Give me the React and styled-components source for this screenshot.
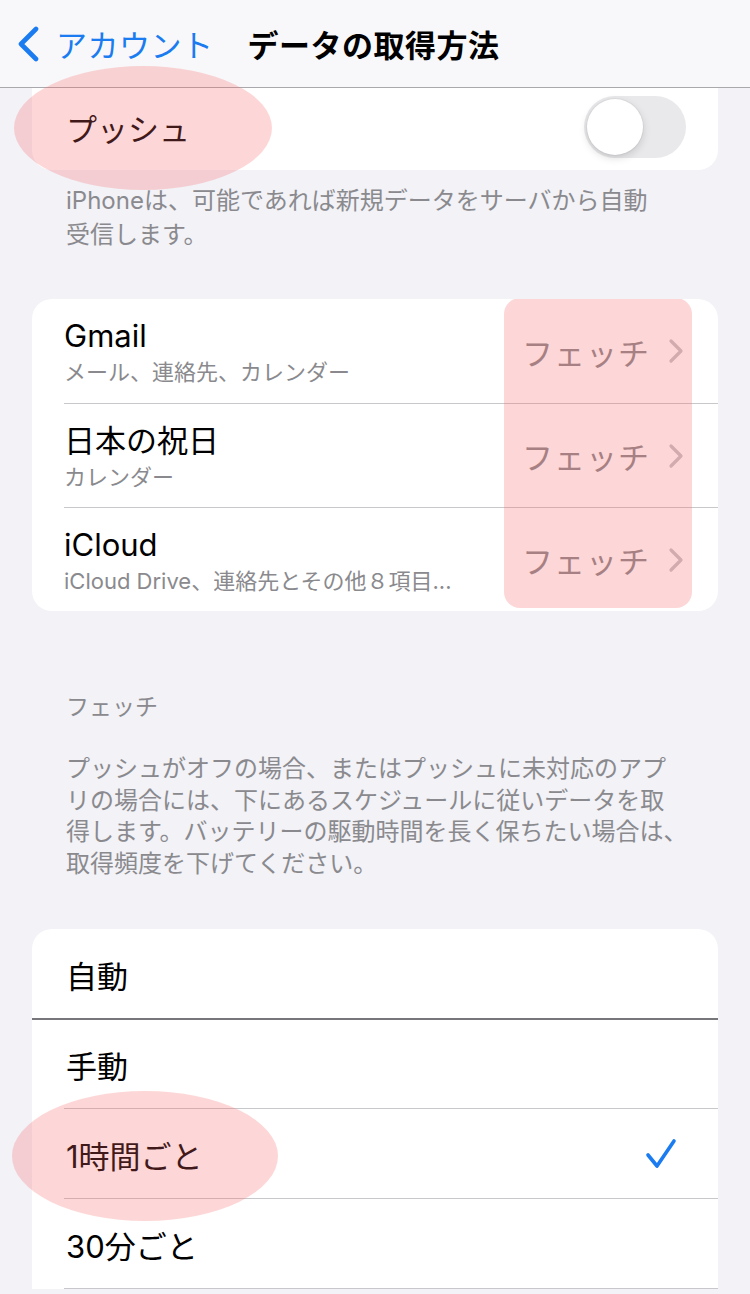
import styled, { createGlobalStyle } from "styled-components";

const GlobalStyle = createGlobalStyle`
  html, body {
    margin: 0;
    padding: 0;
    background: #f2f2f7;
  }
  body {
    font-family: "Inter", "Noto Sans CJK JP", sans-serif;
    -webkit-font-smoothing: antialiased;
  }
`;

const accounts = [
  { name: "Gmail", detail: "メール、連絡先、カレンダー" },
  { name: "日本の祝日", detail: "カレンダー" },
  { name: "iCloud", detail: "iCloud Drive、連絡先とその他８項目..." },
];

const schedules = [
  { label: "自動", strong: true },
  { label: "手動" },
  { label: "1時間ごと", checked: true },
  { label: "30分ごと" },
];

const ChevronLeft = () => (
  <svg width="24" height="36" viewBox="0 0 24 36">
    <path
      d="M20 3 L5 18 L20 33"
      fill="none"
      stroke="#1a7cf0"
      strokeWidth="4.6"
      strokeLinecap="round"
      strokeLinejoin="round"
    />
  </svg>
);

const ChevronRight = () => (
  <svg width="16" height="26" viewBox="0 0 16 26">
    <path
      d="M3 3 L13 13 L3 23"
      fill="none"
      stroke="#c4c4c8"
      strokeWidth="3.2"
      strokeLinecap="round"
      strokeLinejoin="round"
    />
  </svg>
);

const Check = () => (
  <svg width="34" height="32" viewBox="0 0 34 32">
    <path
      d="M4 17 L13 28 L30 3"
      fill="none"
      stroke="#1a7cf0"
      strokeWidth="3.6"
      strokeLinecap="round"
      strokeLinejoin="round"
    />
  </svg>
);

const App = () => {
  return (
    <Page>
      <GlobalStyle />
      <NavBar>
        <BackButton>
          <ChevronLeft />
          <BackLabel>アカウント</BackLabel>
        </BackButton>
        <NavTitle>データの取得方法</NavTitle>
      </NavBar>

      <PushCard>
        <PushLabel>プッシュ</PushLabel>
        <Toggle>
          <Knob />
        </Toggle>
        <Highlight $left={-18} $top={-2} $w={258} $h={124} />
      </PushCard>
      <Footer>
        iPhoneは、可能であれば新規データをサーバから自動
        <br />
        受信します。
      </Footer>

      <AccountCard>
        {accounts.map((each) => (
          <AccountRow key={each.name}>
            <AccountText>
              <AccountName>{each.name}</AccountName>
              <AccountDetail>{each.detail}</AccountDetail>
            </AccountText>
            <Value>フェッチ</Value>
            <ChevronRight />
          </AccountRow>
        ))}
        <ColumnHighlight />
      </AccountCard>

      <SectionHeader>フェッチ</SectionHeader>
      <Description>
        プッシュがオフの場合、またはプッシュに未対応のアプ
        <br />
        リの場合には、下にあるスケジュールに従いデータを取
        <br />
        得します。バッテリーの駆動時間を長く保ちたい場合は、
        <br />
        取得頻度を下げてください。
      </Description>

      <ScheduleCard>
        {schedules.map((each) => (
          <ScheduleRow key={each.label} $strong={each.strong}>
            <ScheduleLabel>{each.label}</ScheduleLabel>
            {each.checked && <Check />}
            {each.checked && (
              <Highlight $left={-20} $top={-18} $w={266} $h={130} />
            )}
          </ScheduleRow>
        ))}
      </ScheduleCard>
    </Page>
  );
};

export default App;

const Page = styled.div`
  width: 750px;
  height: 1294px;
  overflow: hidden;
  background: #f2f2f7;
`;

const NavBar = styled.header`
  position: relative;
  z-index: 3;
  height: 88px;
  box-sizing: border-box;
  display: flex;
  align-items: center;
  padding: 0 0 0 16px;
  background: #f8f8fa;
  border-bottom: 1px solid #a9a9ad;
`;

const BackButton = styled.div`
  display: flex;
  align-items: center;
  gap: 16px;
`;

const BackLabel = styled.span`
  font-size: 31px;
  color: #1a7cf0;
  letter-spacing: 0.5px;
`;

const NavTitle = styled.h1`
  margin: 0 0 0 34px;
  font-size: 31px;
  font-weight: 700;
  color: #000;
  letter-spacing: 0.5px;
`;

const Card = styled.div`
  position: relative;
  margin: 0 32px;
  background: #fff;
  border-radius: 20px;
`;

const PushCard = styled(Card)`
  margin-top: -20px;
  height: 102px;
  box-sizing: border-box;
  padding: 16px 32px 0 34px;
  display: flex;
  align-items: center;
  justify-content: space-between;
`;

const PushLabel = styled.span`
  font-size: 31px;
  color: #000;
`;

const Toggle = styled.div`
  width: 102px;
  height: 62px;
  border-radius: 31px;
  background: #e9e9eb;
  padding: 3px;
  box-sizing: border-box;
`;

const Knob = styled.div`
  width: 56px;
  height: 56px;
  border-radius: 50%;
  background: #fff;
  box-shadow: 0 3px 8px rgba(0, 0, 0, 0.15), 0 0 0 1px rgba(0, 0, 0, 0.04);
`;

const Highlight = styled.div`
  position: absolute;
  left: ${(p) => p.$left}px;
  top: ${(p) => p.$top}px;
  width: ${(p) => p.$w}px;
  height: ${(p) => p.$h}px;
  border-radius: 50%;
  background: rgba(246, 100, 100, 0.26);
  pointer-events: none;
  z-index: 4;
`;

const Footer = styled.p`
  margin: 14px 0 0;
  padding: 0 40px 0 66px;
  font-size: 24px;
  line-height: 34px;
  color: #8a8a8e;
`;

const AccountCard = styled(Card)`
  margin-top: 47px;
  padding-left: 32px;
  overflow: hidden;
`;

const AccountRow = styled.div`
  height: 104px;
  box-sizing: border-box;
  display: flex;
  align-items: center;
  padding-right: 34px;

  & + & {
    border-top: 1px solid #c8c8cc;
  }
`;

const AccountText = styled.div`
  flex: 1;
  display: flex;
  flex-direction: column;
  gap: 4px;
  padding-top: 2px;
`;

const AccountName = styled.span`
  font-size: 31px;
  line-height: 36px;
  color: #000;
`;

const AccountDetail = styled.span`
  font-size: 22px;
  line-height: 28px;
  color: #8a8a8e;
`;

const Value = styled.span`
  font-size: 31px;
  color: #8a8a8e;
  letter-spacing: 1px;
  margin-right: 18px;
`;

const ColumnHighlight = styled.div`
  position: absolute;
  left: 472px;
  top: -1px;
  width: 188px;
  height: 310px;
  border-radius: 16px;
  background: rgba(246, 100, 100, 0.26);
  pointer-events: none;
`;

const SectionHeader = styled.h2`
  margin: 80px 0 0;
  padding-left: 66px;
  font-size: 23px;
  font-weight: 400;
  line-height: 32px;
  color: #8a8a8e;
`;

const Description = styled.p`
  margin: 30px 0 0;
  padding: 0 40px 0 66px;
  font-size: 24px;
  line-height: 31.5px;
  color: #8a8a8e;
`;

const ScheduleCard = styled(Card)`
  margin-top: 50px;
  border-radius: 20px 20px 0 0;
`;

const ScheduleRow = styled.div`
  position: relative;
  height: 90px;
  box-sizing: border-box;
  display: flex;
  align-items: center;
  justify-content: space-between;
  padding: 0 40px 0 34px;

  &::after {
    content: "";
    position: absolute;
    bottom: ${(p) => (p.$strong ? "-1px" : "0")};
    left: ${(p) => (p.$strong ? "0" : "32px")};
    right: 0;
    height: ${(p) => (p.$strong ? "2px" : "1px")};
    background: ${(p) => (p.$strong ? "#77777b" : "#c8c8cc")};
  }
`;

const ScheduleLabel = styled.span`
  font-size: 31px;
  color: #000;
`;
